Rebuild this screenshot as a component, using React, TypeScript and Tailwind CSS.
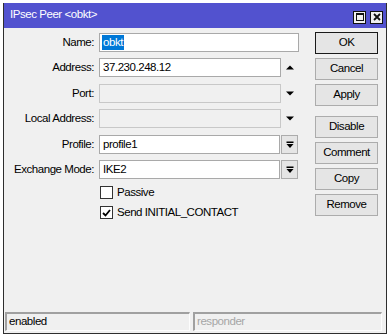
import { ReactNode } from "react";

const font = "font-['Liberation_Sans',Arial,sans-serif] text-[11.5px] tracking-[-0.45px]";

function UpArrow() {
  return (
    <svg width="8" height="5" viewBox="0 0 8 5">
      <polygon points="0,4.5 8,4.5 4,0.5" fill="#000" />
    </svg>
  );
}

function DownArrow() {
  return (
    <svg width="8" height="5" viewBox="0 0 8 5">
      <polygon points="0,0.5 8,0.5 4,4.5" fill="#000" />
    </svg>
  );
}

function DropIcon() {
  return (
    <svg width="8" height="8" viewBox="0 0 8 8">
      <rect x="0.5" y="0.5" width="7" height="1.5" fill="#000" />
      <polygon points="0.5,3 7.5,3 4,7" fill="#000" />
    </svg>
  );
}

type RowProps = {
  label: string;
  className?: string;
  children: ReactNode;
};

function Row({ label, className = "", children }: RowProps) {
  return (
    <div className={`flex items-center h-[19px] ${className}`}>
      <div className="w-[90px] text-right text-black">{label}</div>
      <div className="ml-[5px] flex items-center h-full">{children}</div>
    </div>
  );
}

function TextBox({ value, width, disabled = false, children }: { value?: string; width: number; disabled?: boolean; children?: ReactNode }) {
  return (
    <div
      className={`h-[19px] border flex items-center pl-[3px] ${
        disabled ? "bg-[#f0f0f0] border-[#c8c8c8]" : "bg-white border-[#a9a9a9]"
      }`}
      style={{ width }}
    >
      {children ?? <span className="text-black">{value}</span>}
    </div>
  );
}

function SideButton({ children, primary = false, className = "" }: { children: ReactNode; primary?: boolean; className?: string }) {
  return (
    <div
      className={`w-[63px] h-[22px] flex items-center justify-center bg-[#e5e5e5] text-black border ${
        primary ? "border-[#1a1a1a]" : "border-[#acacac]"
      } ${className}`}
    >
      {children}
    </div>
  );
}

function CheckRow({ label, checked, className = "" }: { label: string; checked?: boolean; className?: string }) {
  return (
    <div className={`flex items-center h-[13px] pl-[96px] ${className}`}>
      <div className="w-[13px] h-[13px] bg-white border border-[#333] flex items-center justify-center">
        {checked && (
          <svg width="9" height="8" viewBox="0 0 9 8">
            <polyline points="1,4 3.5,6.5 8,1" fill="none" stroke="#000" strokeWidth="1.8" />
          </svg>
        )}
      </div>
      <span className="ml-[4px] text-black">{label}</span>
    </div>
  );
}

export default function App() {
  return (
    <div className={`w-[387px] h-[336px] bg-white pt-[3px] pl-[3px] overflow-hidden ${font}`}>
      <div className="w-[384px] h-[331px] border border-[#2e2e2e] border-t-0 bg-[#f0f0f0] flex flex-col">
        {/* title bar */}
        <div className="h-[25px] bg-[#5252cf] flex items-center pl-[6px] pr-[3px] text-white text-[11.5px]">
          <span className="mt-[-1px]">IPsec Peer &lt;obkt&gt;</span>
          <div className="ml-auto flex items-center gap-[4px] mt-[3px]">
            <div className="w-[13px] h-[13px] bg-[#f0f0f0] border border-[#111] flex items-center justify-center">
              <div className="w-[8px] h-[8px] border border-[#111] border-t-2" />
            </div>
            <div className="w-[13px] h-[13px] bg-[#f0f0f0] border border-[#111] flex items-center justify-center">
              <svg width="8" height="8" viewBox="0 0 8 8">
                <path d="M1 1 L7 7 M7 1 L1 7" stroke="#111" strokeWidth="1.8" />
              </svg>
            </div>
          </div>
        </div>

        {/* body */}
        <div className="flex">
          <div className="flex flex-col pt-[5px]">
            <Row label="Name:">
              <TextBox width={200}>
                <span className="bg-[#0078d7] text-white leading-[15px] px-px -ml-px">obkt</span>
              </TextBox>
            </Row>
            <Row label="Address:" className="mt-[6px]">
              <TextBox width={182} value="37.230.248.12" />
              <div className="w-[18px] flex justify-center">
                <UpArrow />
              </div>
            </Row>
            <Row label="Port:" className="mt-[7px]">
              <TextBox width={182} disabled />
              <div className="w-[18px] flex justify-center">
                <DownArrow />
              </div>
            </Row>
            <Row label="Local Address:" className="mt-[6px]">
              <TextBox width={182} disabled />
              <div className="w-[18px] flex justify-center">
                <DownArrow />
              </div>
            </Row>
            <Row label="Profile:" className="mt-[7px]">
              <TextBox width={181} value="profile1" />
              <div className="ml-[1px] w-[17px] h-[19px] bg-[#e5e5e5] border border-[#acacac] flex items-center justify-center">
                <DropIcon />
              </div>
            </Row>
            <Row label="Exchange Mode:" className="mt-[6px]">
              <TextBox width={181} value="IKE2" />
              <div className="ml-[1px] w-[17px] h-[19px] bg-[#e5e5e5] border border-[#acacac] flex items-center justify-center">
                <DropIcon />
              </div>
            </Row>
            <CheckRow label="Passive" className="mt-[7px]" />
            <CheckRow label="Send INITIAL_CONTACT" checked className="mt-[7px]" />
          </div>

          <div className="ml-[16px] flex flex-col gap-[4px] pt-[4px]">
            <SideButton primary>OK</SideButton>
            <SideButton>Cancel</SideButton>
            <SideButton>Apply</SideButton>
            <SideButton className="mt-[6px]">Disable</SideButton>
            <SideButton>Comment</SideButton>
            <SideButton>Copy</SideButton>
            <SideButton>Remove</SideButton>
          </div>
        </div>

        <div className="flex-1" />

        {/* status bar */}
        <div className="flex gap-[3px] px-px pb-[2px]">
          <div className="w-[185px] h-[19px] border-t-2 border-l-2 border-[#a0a0a0] border-r border-b border-r-[#fdfdfd] border-b-[#fdfdfd] flex items-center pl-[2px] text-black">
            enabled
          </div>
          <div className="w-[189px] h-[19px] border-t-2 border-l-2 border-[#a0a0a0] border-r border-b border-r-[#fdfdfd] border-b-[#fdfdfd] flex items-center pl-[2px] text-[#a6a6a6]">
            responder
          </div>
        </div>
      </div>
    </div>
  );
}
